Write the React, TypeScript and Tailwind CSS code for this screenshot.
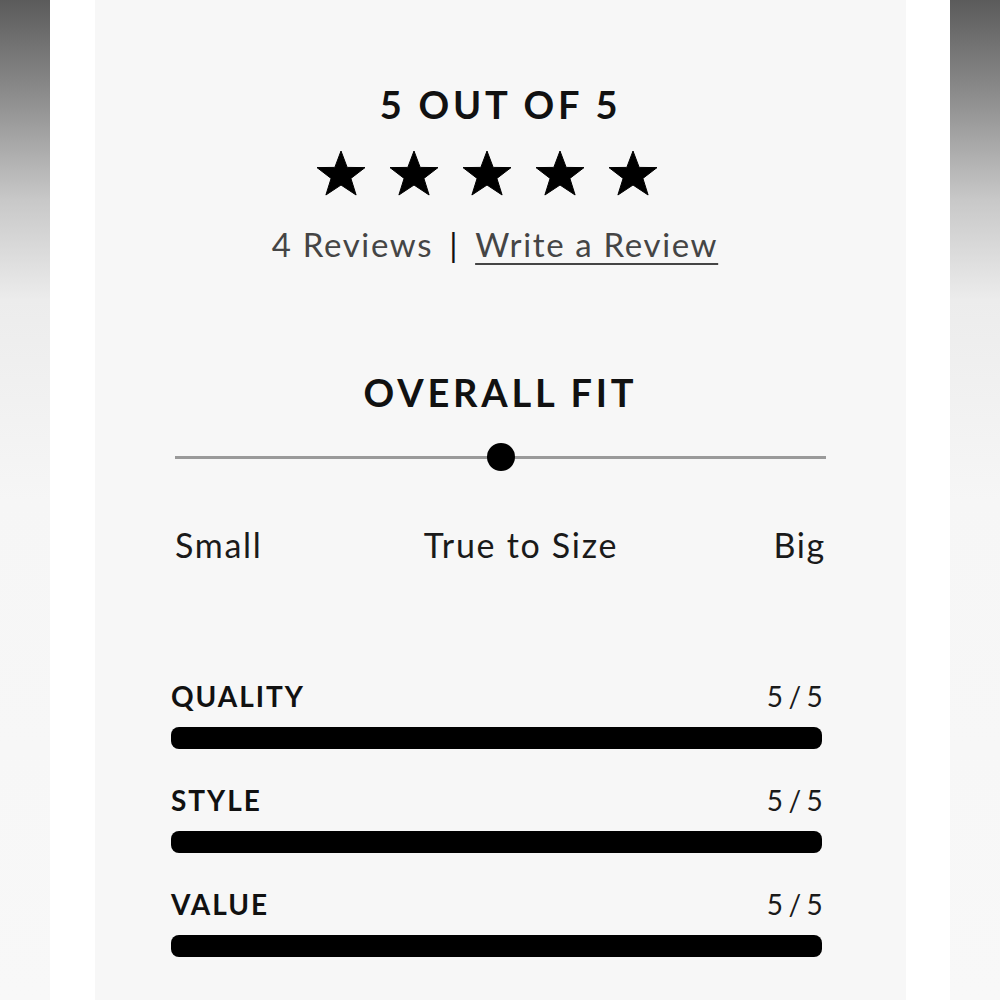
const ratings = [
  { label: 'QUALITY', value: 5 },
  { label: 'STYLE', value: 5 },
  { label: 'VALUE', value: 5 },
];

function Star() {
  return (
    <svg width="50" height="46" viewBox="0 0 50 46" className="block">
      <polygon
        points="25,1 31.2,17.4 49,17.6 34.9,28.4 40.1,45 25,35 9.9,45 15.1,28.4 1,17.6 18.8,17.4"
        fill="#000"
        stroke="#000"
        strokeWidth="1"
        strokeLinejoin="round"
      />
    </svg>
  );
}

export default function App() {
  return (
    <div className="flex h-[1000px] w-full font-['Lato','Liberation_Sans',sans-serif] bg-white">
      <div className="w-[50px] bg-[linear-gradient(to_bottom,#5b5b5b_0px,#8f8f8f_100px,#c8c8c8_200px,#ececec_300px,#f6f6f6_500px,#f8f8f8_1000px)]" />
      <div className="w-[45px] bg-white" />

      <div className="flex flex-1 flex-col bg-[#f7f7f7]">
        {/* Resumo */}
        <div className="flex flex-col items-center pt-[82px]">
          <h1 className="text-[38px] font-bold leading-[44px] tracking-[0.1em] text-[#111]">5 OUT OF 5</h1>
          <div className="mt-[24px] flex gap-[23px] pr-[28px]">
            {[0, 1, 2, 3, 4].map((i) => (
              <Star key={i} />
            ))}
          </div>
          <p className="mt-[28px] flex items-center pr-[11px] text-[33px] leading-[40px] tracking-[0.05em] text-[#454545]">
            <span>4 Reviews</span>
            <span className="mx-[16px] text-[#111]">|</span>
            <a className="underline decoration-[2px] underline-offset-[6px]">Write a Review</a>
          </p>
        </div>

        {/* Overall fit */}
        <div className="mt-[106px] flex flex-col px-[80px]">
          <h2 className="text-center text-[38px] font-bold leading-[44px] tracking-[0.1em] text-[#111]">OVERALL FIT</h2>
          <div className="relative mt-[29px] flex h-[28px] items-center">
            <div className="h-[3px] w-full bg-[#9a9a9a]" />
            <div className="absolute left-1/2 top-0 h-[28px] w-[28px] -translate-x-1/2 rounded-full bg-black" />
          </div>
          <div className="mt-[54px] flex justify-between text-[34px] leading-[40px] tracking-[0.05em] text-[#1a1a1a]">
            <span>Small</span>
            <span className="pl-[6px]">True to Size</span>
            <span>Big</span>
          </div>
        </div>

        {/* Notas */}
        <div className="mt-[116px] flex flex-col gap-[36px] pl-[76px] pr-[84px]">
          {ratings.map((r) => (
            <div key={r.label} className="flex flex-col gap-[16px]">
              <div className="flex h-[30px] items-center justify-between">
                <span className="text-[28px] font-bold tracking-[0.07em] text-[#111]">{r.label}</span>
                <span className="text-[28px] tracking-[-0.03em] text-[#1a1a1a]">
                  {r.value} / 5
                </span>
              </div>
              <div className="h-[22px] w-full rounded-[8px] bg-[#e5e5e5]">
                <div className="h-full rounded-[8px] bg-black" style={{ width: `${(r.value / 5) * 100}%` }} />
              </div>
            </div>
          ))}
        </div>
      </div>

      <div className="w-[44px] bg-white" />
      <div className="w-[50px] bg-[linear-gradient(to_bottom,#5b5b5b_0px,#8f8f8f_100px,#c8c8c8_200px,#ececec_300px,#f6f6f6_500px,#f8f8f8_1000px)]" />
    </div>
  );
}
